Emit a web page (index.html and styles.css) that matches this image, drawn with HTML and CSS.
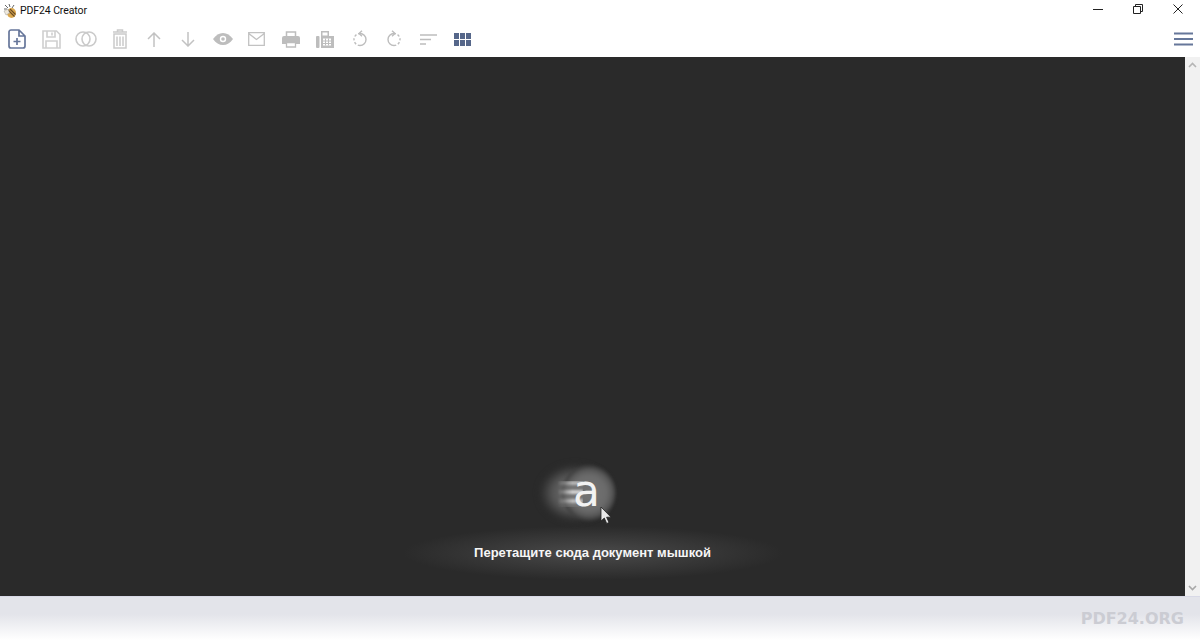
FILE: index.html
```html
<!DOCTYPE html>
<html lang="ru">
<head>
<meta charset="utf-8">
<title>PDF24 Creator</title>
<link rel="stylesheet" href="styles.css">
</head>
<body>
<div class="app">
  <header class="titlebar">
    <svg class="app-icon" width="16" height="16" viewBox="0 0 16 16">
      <path d="M3 2l3 3M2 6h3M7 1l1 3M12 2l-2 3" stroke="#666" stroke-width="1" fill="none"/>
      <ellipse cx="9.500" cy="10" rx="4.500" ry="5" fill="#dba84e"/>
      <path d="M6 7l6.500 6.500M8 6l5.500 5.500" stroke="#6a4c24" stroke-width="1.200"/>
      <path d="M2 8l4-2 1.500 4L4 12z" fill="#efe9dc" stroke="#999" stroke-width=".5"/>
    </svg>
    <span class="title">PDF24 Creator</span>
    <div class="winctl">
      <button class="winbtn"><svg width="10" height="10" viewBox="0 0 10 10"><path d="M0 5.500h10" stroke="#222" stroke-width="1"/></svg></button>
      <button class="winbtn"><svg width="10" height="10" viewBox="0 0 10 10"><path d="M.5 2.500h7v7h-7zM2.500 2.500v-2h7v7h-2" stroke="#222" stroke-width="1" fill="none"/></svg></button>
      <button class="winbtn"><svg width="10" height="10" viewBox="0 0 10 10"><path d="M.5.500l9 9M9.500.500l-9 9" stroke="#222" stroke-width="1"/></svg></button>
    </div>
  </header>
  <nav class="toolbar">
    <span class="tool"><svg width="18" height="20" viewBox="0 0 18 20" fill="none" stroke="#66769a" stroke-width="1.700"><path d="M3 1h8l6 6v10a2 2 0 0 1-2 2H3a2 2 0 0 1-2-2V3a2 2 0 0 1 2-2zM11 1v6h6M9 9v7M5.500 12.500h7"/></svg></span>
    <span class="tool"><svg width="19" height="19" viewBox="0 0 19 19" fill="none" stroke="#cfcfcf" stroke-width="1.600"><path d="M1 1h13.500L18 4.500V18H1zM5 1v6h8V1M4 18v-7h11v7M10 2.500v3"/></svg></span>
    <span class="tool"><svg width="22" height="16" viewBox="0 0 22 16" fill="none" stroke="#cacaca" stroke-width="1.600"><circle cx="8" cy="8" r="7"/><circle cx="14" cy="8" r="7"/></svg></span>
    <span class="tool"><svg width="16" height="20" viewBox="0 0 16 20" fill="none" stroke="#cacaca" stroke-width="1.500"><path d="M1 3h14M5.500 3V1h5v2M2 5h12v14H2zM5 7.500V17M8 7.500V17M11 7.500V17"/></svg></span>
    <span class="tool"><svg width="14" height="15" viewBox="0 0 14 15" fill="none" stroke="#c2c2c2" stroke-width="1.500"><path d="M7 15V1M1 7l6-6 6 6"/></svg></span>
    <span class="tool"><svg width="14" height="15" viewBox="0 0 14 15" fill="none" stroke="#c2c2c2" stroke-width="1.500"><path d="M7 0v14M1 8l6 6 6-6"/></svg></span>
    <span class="tool"><svg width="20" height="12" viewBox="0 0 20 12"><path d="M0 6c3-4 6-6 10-6s7 2 10 6c-3 4-6 6-10 6S3 10 0 6z" fill="#bdbdbd"/><circle cx="10" cy="6" r="3.200" fill="#fff"/><circle cx="10" cy="6" r="1.800" fill="#bdbdbd"/></svg></span>
    <span class="tool"><svg width="17" height="14" viewBox="0 0 17 14" fill="none" stroke="#c2c2c2" stroke-width="1.300"><path d="M.7.700h15.600v12.600H.7zM.7 1.500l7.800 6 7.800-6"/></svg></span>
    <span class="tool"><svg width="18" height="17" viewBox="0 0 18 17"><path d="M4.500 5V1h9v4" fill="none" stroke="#bdbdbd" stroke-width="1.500"/><path d="M2 5h14a2 2 0 0 1 2 2v6h-4v-2H4v2H0V7a2 2 0 0 1 2-2z" fill="#bdbdbd"/><path d="M4.500 11.500h9v4.500h-9z" fill="none" stroke="#bdbdbd" stroke-width="1.300"/></svg></span>
    <span class="tool"><svg width="18" height="18" viewBox="0 0 18 18"><rect x="0" y="6" width="3.500" height="12" rx="1" fill="#bdbdbd"/><path d="M5 6V1h8v5h5v12H5z" fill="#bdbdbd"/><path d="M6.500 2.500h5v3h-5zM7 8.500h8v7H7z" fill="#fff"/><path d="M9.500 8.500v7M12.500 8.500v7M7 11h8M7 13.500h8" stroke="#bdbdbd"/></svg></span>
    <span class="tool"><svg width="16" height="18" viewBox="0 0 16 18" fill="none" stroke="#bdbdbd" stroke-width="1.400"><path d="M8 3.500A6 6 0 0 1 8 15.500"/><path d="M8 15.500A6 6 0 0 1 8 3.500" stroke-dasharray="2.300 1.800"/><path d="M10 .8L7 3.500l3 2.700"/></svg></span>
    <span class="tool"><svg width="16" height="18" viewBox="0 0 16 18" fill="none" stroke="#bdbdbd" stroke-width="1.400"><path d="M8 3.500A6 6 0 0 0 8 15.500"/><path d="M8 15.500A6 6 0 0 0 8 3.500" stroke-dasharray="2.300 1.800"/><path d="M6 .8L9 3.500 6 6.200"/></svg></span>
    <span class="tool"><svg width="17" height="11" viewBox="0 0 17 11" stroke="#bdbdbd" stroke-width="1.300"><path d="M0 1h17M0 5.500h11M0 10h6"/></svg></span>
    <span class="tool"><svg width="17" height="13" viewBox="0 0 17 13" fill="#56678a"><rect width="5" height="6"/><rect x="6" width="5" height="6"/><rect x="12" width="5" height="6"/><rect y="7" width="5" height="6"/><rect x="6" y="7" width="5" height="6"/><rect x="12" y="7" width="5" height="6"/></svg></span>
    <span class="menu-btn"><svg width="19" height="14" viewBox="0 0 19 14" stroke="#66779a" stroke-width="2"><path d="M0 1.500h19M0 7h19M0 12.500h19"/></svg></span>
  </nav>
  <main class="workspace">
    <div class="dropzone">
      <div class="anim">
        <span class="blob blob-trail"></span>
        <span class="blob blob-core"></span>
        <span class="streaks"></span>
        <span class="letter">a</span>
        <svg class="cursor" width="12" height="19" viewBox="0 0 12 19"><path d="M1 1v14l3.300-3 2.400 5.500 2.300-1-2.400-5.300H11z" fill="#e8e8e8" stroke="#222" stroke-width=".8"/></svg>
      </div>
      <div class="hint">Перетащите сюда документ мышкой</div>
    </div>
    <div class="scrollbar">
      <svg width="9" height="6" viewBox="0 0 9 6" fill="none" stroke="#b5b5b5" stroke-width="1.600"><path d="M1 5l3.500-3.500L8 5"/></svg>
      <svg width="9" height="6" viewBox="0 0 9 6" fill="none" stroke="#a8a8a8" stroke-width="1.600"><path d="M1 1l3.500 3.500L8 1"/></svg>
    </div>
  </main>
  <footer class="footer"><span class="brand">PDF24.ORG</span></footer>
</div>
</body>
</html>
```
FILE: styles.css
```css
* { box-sizing: border-box; }
html, body { margin: 0; height: 100%; overflow: hidden; }
body { background: #fff; font-family: Roboto, "Liberation Sans", sans-serif; }
.app { width: 1200px; height: 640px; display: flex; flex-direction: column; }
.titlebar { height: 20px; display: flex; align-items: center; padding: 1px 0 0 2px; background: #fff; }
.app-icon { flex: none; }
.title { margin-left: 2px; font-size: 10.500px; letter-spacing: -.1px; color: #111; line-height: 19px; }
.winctl { margin-left: auto; margin-right: 2px; display: flex; height: 18px; margin-top: -3px; }
.winbtn { width: 40px; border: 0; background: none; padding: 0; display: flex; align-items: center; justify-content: center; }
.toolbar { height: 37px; display: flex; align-items: center; padding-top: 1px; background: #fff; }
.tool { width: 34.250px; height: 24px; flex: none; display: flex; align-items: center; justify-content: center; }
.menu-btn { margin-left: auto; margin-right: 7px; display: flex; }
.workspace { height: 539px; display: flex; background: #2a2a2a; }
.dropzone { flex: 1; display: flex; flex-direction: column; align-items: center; justify-content: flex-end; }
.anim { position: relative; width: 80px; height: 60px; margin: 0 23px 3px 0; }
.blob { position: absolute; border-radius: 50%; }
.blob-trail { left: -1px; top: 2px; width: 70px; height: 56px; background: radial-gradient(ellipse closest-side, #686868 0, #5a5a5a 60%, #2a2a2a 100%); filter: blur(3px); }
.blob-core { left: 21px; top: 2px; width: 54px; height: 56px; background: radial-gradient(circle closest-side, #747474 0, #6a6a6a 65%, #585858 85%, #3a3a3a 100%); filter: blur(1.500px); }
.streaks { position: absolute; left: 16px; top: 18px; width: 26px; height: 26px;
  background: linear-gradient(to bottom, #b4b4b4 0 4px, #757575 4px 9px, #cfcfcf 9px 13px, #757575 13px 18px, #bcbcbc 18px 22px, #757575 22px);
  -webkit-mask-image: linear-gradient(to right, transparent, #000 60%);
  mask-image: linear-gradient(to right, transparent, #000 60%); filter: blur(.8px); }
.letter { position: absolute; left: 32px; top: 1px; font: 400 44px/54px "DejaVu Sans", sans-serif; color: #f2f2f2; }
.cursor { position: absolute; left: 59px; top: 43px; }
.hint { width: 380px; height: 54px; margin-bottom: 16px; text-align: center; font: 700 13px/54px "Liberation Sans", sans-serif; color: #f6f6f6;
  background: radial-gradient(ellipse closest-side, #4a4a4a 0, #3a3a3a 50%, #2a2a2a 100%); }
.scrollbar { width: 15px; background: #f1f1f1; display: flex; flex-direction: column; justify-content: space-between; align-items: center; padding: 5px 0; }
.footer { flex: 1; display: flex; justify-content: flex-end; padding: 12px 16px 0 0;
  border-top: 1px solid #d8d9e6; background: linear-gradient(to bottom, #e3e4ea 0, #e3e4ea 40%, #fff 100%); }
.brand { font: 700 16px/20px "DejaVu Sans", sans-serif; color: #cbccd3; }
```
